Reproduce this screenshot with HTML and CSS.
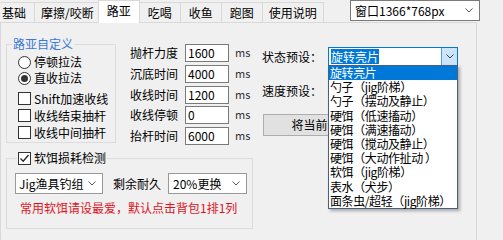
FILE: index.html
```html
<!DOCTYPE html>
<html lang="zh-CN">
<head>
  <meta charset="UTF-8">
  <title>路亚设置</title>
  <link rel="stylesheet" href="styles.css">
</head>
<body>

  <!-- TAB STRIP + WINDOW SIZE -->
  <div class="topbar">
    <div class="tabs">
      <div class="tab">基础</div>
      <div class="tab">摩擦/咬断</div>
      <div class="tab active">路亚</div>
      <div class="tab">吃喝</div>
      <div class="tab">收鱼</div>
      <div class="tab">跑图</div>
      <div class="tab">使用说明</div>
    </div>
    <div class="combo window-combo">
      <span>窗口1366*768px</span>
      <svg class="chev" width="8" height="5" viewBox="0 0 8 5"><polyline points="0.5,0.5 4,4 7.5,0.5" fill="none" stroke="#555" stroke-width="1"/></svg>
    </div>
  </div>

  <!-- LURE PAGE -->
  <div class="page">
    <div class="upper">

      <fieldset class="group lure-group">
        <legend class="blue-title">路亚自定义</legend>
        <div class="opts">
          <label class="opt"><span class="radio"></span>停顿拉法</label>
          <label class="opt"><span class="radio on"></span>直收拉法</label>
          <label class="opt chk first"><span class="box"></span>Shift加速收线</label>
          <label class="opt chk"><span class="box"></span>收线结束抽杆</label>
          <label class="opt chk"><span class="box"></span>收线中间抽杆</label>
        </div>
      </fieldset>

      <div class="params">
        <span class="pname">抛杆力度</span><span class="field">1600</span><span class="unit">ms</span>
        <span class="pname">沉底时间</span><span class="field">4000</span><span class="unit">ms</span>
        <span class="pname">收线时间</span><span class="field">1200</span><span class="unit">ms</span>
        <span class="pname">收线停顿</span><span class="field">0</span><span class="unit">ms</span>
        <span class="pname">抬杆时间</span><span class="field">6000</span><span class="unit">ms</span>
      </div>

      <div class="presets">
        <div class="preset-row">
          <span class="preset-label">状态预设：</span>
          <div class="combo preset-combo open">
            <span class="combo-text"><span class="sel">旋转亮片</span></span>
            <span class="drop-btn">
              <svg width="8" height="5" viewBox="0 0 8 5"><polyline points="0.5,0.5 4,4 7.5,0.5" fill="none" stroke="#444" stroke-width="1"/></svg>
            </span>
          </div>
        </div>
        <div class="preset-row second">
          <span class="preset-label">速度预设：</span>
          <div class="combo preset-combo"></div>
        </div>
        <button class="save-btn">将当前设置保存为预设</button>
      </div>
    </div>

    <fieldset class="group wear-group">
      <legend class="check-title"><span class="box on">
        <svg width="11" height="11" viewBox="0 0 11 11"><polyline points="1.5,5.5 4.2,8.2 9.5,2" fill="none" stroke="#222" stroke-width="1.3"/></svg>
      </span>软饵损耗检测</legend>
      <div class="wear-row">
        <div class="combo rig-combo">
          <span>Jig渔具钓组</span>
          <svg class="chev" width="8" height="5" viewBox="0 0 8 5"><polyline points="0.5,0.5 4,4 7.5,0.5" fill="none" stroke="#555" stroke-width="1"/></svg>
        </div>
        <span class="wear-label">剩余耐久</span>
        <div class="combo pct-combo">
          <span>20%更换</span>
          <svg class="chev" width="8" height="5" viewBox="0 0 8 5"><polyline points="0.5,0.5 4,4 7.5,0.5" fill="none" stroke="#555" stroke-width="1"/></svg>
        </div>
      </div>
      <p class="note">常用软饵请设最爱，默认点击背包1排1列</p>
    </fieldset>

    <!-- open list of the state preset combo -->
    <ul class="dropdown">
      <li class="hl">旋转亮片</li>
      <li>勺子（jig阶梯）</li>
      <li>勺子（摆动及静止）</li>
      <li>硬饵（低速搐动）</li>
      <li>硬饵（满速搐动）</li>
      <li>硬饵（搅动及静止）</li>
      <li>硬饵（大动作扯动 ）</li>
      <li>软饵（jig阶梯）</li>
      <li>表水（犬步）</li>
      <li>面条虫/超轻（jig阶梯）</li>
    </ul>
  </div>

</body>
</html>
```

FILE: styles.css
```css
body {
  margin: 0;
  width: 503px;
  height: 240px;
  overflow: hidden;
  background: #f0f0f0;
  color: #000;
  font-family: "Noto Sans CJK SC", "Microsoft YaHei", sans-serif;
  font-size: 12px;
  line-height: 16px;
}

/* tab strip */
.topbar {
  display: flex;
  height: 22px;
}

.tabs {
  display: flex;
  align-items: flex-end;
  margin-left: -7px;
}

.tab {
  box-sizing: border-box;
  min-width: 42px;
  height: 20px;
  padding: 1px 6px 0;
  line-height: 18px;
  text-align: center;
  background: #f0f0f0;
  border: 1px solid #d9d9d9;
  border-bottom: none;
  margin-right: -1px;
}

.tab.active {
  position: relative;
  z-index: 1;
  height: 23px;
  margin: 0 -1px -1px -2px;
  padding-top: 0;
  line-height: 20px;
  background: #fff;
}

/* combo boxes */
.combo {
  box-sizing: border-box;
  display: flex;
  align-items: center;
  justify-content: space-between;
  background: #fff;
  border: 1px solid #7a7a7a;
  padding: 0 6px 0 4px;
  white-space: nowrap;
}

.window-combo {
  width: 130px;
  height: 21px;
  margin: 0 23px 0 auto;
}

.page {
  position: relative;
  box-sizing: border-box;
  width: 477px;
  height: 218px;
  border: 1px solid #d9d9d9;
  border-bottom: none;
}

.upper {
  display: flex;
  align-items: flex-start;
  height: 127px;
}

/* group boxes */
.group {
  box-sizing: border-box;
  margin: 0;
  padding: 0;
  min-inline-size: 0;
  border: 1px solid #dcdcdc;
}

.group legend {
  padding: 0 1px;
  line-height: 16px;
}

.lure-group {
  width: 110px;
  height: 107px;
  margin: 13px 0 0 5px;
}

.blue-title {
  margin-left: 5px;
  color: #3b7ad3;
}

.opts {
  padding: 2px 0 0 11px;
}

.opt {
  display: flex;
  align-items: center;
  gap: 3px;
  height: 16px;
  white-space: nowrap;
}

.opt.chk {
  height: 17px;
}

.opt.first {
  margin-top: 4px;
}

.radio {
  box-sizing: border-box;
  width: 13px;
  height: 13px;
  border: 1px solid #333;
  border-radius: 50%;
  background: #fff;
  display: flex;
  align-items: center;
  justify-content: center;
}

.radio.on::after {
  content: "";
  width: 7px;
  height: 7px;
  border-radius: 50%;
  background: #333;
}

.box {
  box-sizing: border-box;
  width: 13px;
  height: 13px;
  border: 1px solid #333;
  background: #fff;
  display: flex;
  align-items: center;
  justify-content: center;
}

/* timing params */
.params {
  display: grid;
  grid-template-columns: 55px 44px 20px;
  grid-auto-rows: 18px;
  row-gap: 2.75px;
  margin: 21px 0 0 14px;
}

.pname {
  line-height: 18px;
}

.field {
  box-sizing: border-box;
  height: 18px;
  padding-left: 2px;
  line-height: 16px;
  background: #fff;
  border: 1px solid #7a7a7a;
}

.unit {
  padding-left: 6px;
  font-size: 11px;
  line-height: 16px;
  color: #333;
}

/* presets */
.presets {
  margin: 24px 0 0 13px;
}

.preset-row {
  display: flex;
  align-items: center;
}

.preset-row.second {
  margin-top: 15px;
}

.preset-label {
  width: 66px;
}

.preset-combo {
  width: 130px;
  height: 19px;
  padding: 0;
}

.preset-combo.open {
  border-color: #0078d7;
}

.combo-text {
  padding-left: 2px;
}

.sel {
  display: inline-block;
  background: #0078d7;
  color: #fff;
  line-height: 15px;
}

.drop-btn {
  box-sizing: border-box;
  width: 16px;
  height: 17px;
  display: flex;
  align-items: center;
  justify-content: center;
  background: #cce4f7;
  border-left: 1px solid #569de5;
}

.save-btn {
  display: block;
  box-sizing: border-box;
  width: 177px;
  height: 22px;
  margin: 14px 0 0 1px;
  padding: 0;
  font: inherit;
  background: #e1e1e1;
  border: 1px solid #adadad;
  white-space: nowrap;
}

/* soft bait wear */
.wear-group {
  width: 247px;
  height: 79px;
  margin-left: 5px;
}

.check-title {
  display: flex;
  align-items: center;
  gap: 3px;
  margin-left: 10px;
}

.wear-row {
  display: flex;
  align-items: center;
  margin-top: 7px;
  padding-left: 8px;
}

.rig-combo {
  width: 88px;
  height: 21px;
  border-color: #999;
  padding: 0 6px 0 3px;
}

.wear-label {
  margin: 0 7px 0 10px;
}

.pct-combo {
  width: 79px;
  height: 21px;
  border-color: #999;
}

.note {
  margin: 6px 0 0;
  padding-left: 13px;
  color: #e0141e;
}

/* open dropdown list */
.dropdown {
  position: absolute;
  left: 327px;
  top: 42px;
  box-sizing: border-box;
  width: 130px;
  margin: 0;
  padding: 0;
  list-style: none;
  background: #fff;
  border: 1px solid #4a607e;
  box-shadow: 2px 2px 3px rgba(0,0,0,0.3);
}

.dropdown li {
  padding-left: 1px;
  line-height: 14.2px;
  letter-spacing: -0.4px;
  white-space: nowrap;
}

.dropdown li.hl {
  background: #0078d7;
  color: #fff;
}
```
